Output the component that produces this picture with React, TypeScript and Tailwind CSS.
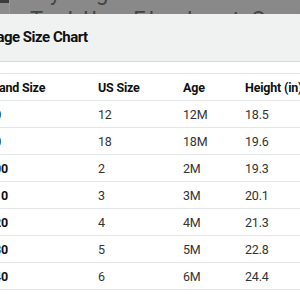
import React from "react";

const rows = [
  { brand: "80", us: "12", age: "12M", height: "18.5" },
  { brand: "90", us: "18", age: "18M", height: "19.6" },
  { brand: "100", us: "2", age: "2M", height: "19.3" },
  { brand: "110", us: "3", age: "3M", height: "20.1" },
  { brand: "120", us: "4", age: "4M", height: "21.3" },
  { brand: "130", us: "5", age: "5M", height: "22.8" },
  { brand: "140", us: "6", age: "6M", height: "24.4" },
];

const App: React.FC = () => {
  return (
    <div className="w-[300px] h-[300px] overflow-hidden bg-white font-['Roboto',sans-serif] text-[#0f1111]">
      {/* dimmed page behind the modal */}
      <div className="h-[14px] bg-[#898989] overflow-hidden flex">
        <div className="w-[68px] h-full bg-[#8c8c8c] border-r border-[#969696] flex justify-center">
          <div className="w-[11px] h-[3px] bg-[#3d3d3d] ml-[-2px]" />
        </div>
        <div className="flex-1 text-[22px] leading-[22px] text-[#444] whitespace-nowrap">
          <div className="mt-[-18px] pl-[40px] tracking-[6px]">ying</div>
          <div className="mt-[5px] pl-[20px] tracking-[3px]">Toddler Elephant Costume</div>
        </div>
      </div>

      {/* modal header */}
      <div className="h-[48px] bg-[#f0f2f2] border-b border-[#d5d9d9] flex items-center">
        <h2 className="ml-[-35px] text-[15px] font-bold tracking-[-0.5px] whitespace-nowrap">
          Package Size Chart
        </h2>
      </div>

      {/* table */}
      <div className="pt-[11px]">
        <div className="ml-[-13px] text-[12.5px] tracking-[-0.2px]">
          <div className="grid grid-cols-[111px_85px_62px_1fr] h-[27px] pt-[2px] items-center border-t border-[#e3e6e6] font-bold whitespace-nowrap">
            <div>Brand Size</div>
            <div>US Size</div>
            <div>Age</div>
            <div>Height (in)</div>
          </div>
          {rows.map((r) => (
            <div
              key={r.brand}
              className="grid grid-cols-[111px_85px_62px_1fr] h-[27px] pt-[2px] items-center border-t border-[#e3e6e6] text-[#333]"
            >
              <div className="font-bold text-[#0f1111]">{r.brand}</div>
              <div>{r.us}</div>
              <div>{r.age}</div>
              <div>{r.height}</div>
            </div>
          ))}
          <div className="border-t border-[#e3e6e6]" />
        </div>
      </div>
    </div>
  );
};

export default App;
